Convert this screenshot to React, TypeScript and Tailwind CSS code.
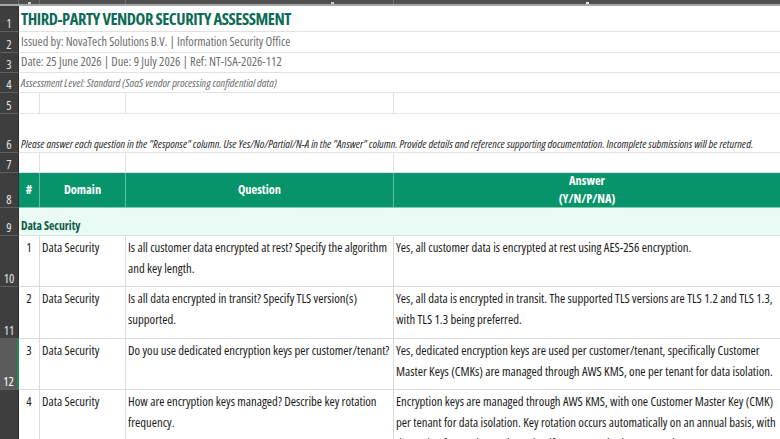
import React from "react";

type Q = { n: number; domain: string; question: string; answer: string; h: string; sel?: boolean };

const rows: Q[] = [
  {
    n: 1,
    domain: "Data Security",
    question: "Is all customer data encrypted at rest? Specify the algorithm and key length.",
    answer: "Yes, all customer data is encrypted at rest using AES-256 encryption.",
    h: "h-[51px]",
  },
  {
    n: 2,
    domain: "Data Security",
    question: "Is all data encrypted in transit? Specify TLS version(s) supported.",
    answer:
      "Yes, all data is encrypted in transit. The supported TLS versions are TLS 1.2 and TLS 1.3, with TLS 1.3 being preferred.",
    h: "h-[52px]",
  },
  {
    n: 3,
    domain: "Data Security",
    question: "Do you use dedicated encryption keys per customer/tenant?",
    answer:
      "Yes, dedicated encryption keys are used per customer/tenant, specifically Customer Master Keys (CMKs) are managed through AWS KMS, one per tenant for data isolation.",
    h: "h-[51px]",
    sel: true,
  },
  {
    n: 4,
    domain: "Data Security",
    question: "How are encryption keys managed? Describe key rotation frequency.",
    answer:
      "Encryption keys are managed through AWS KMS, with one Customer Master Key (CMK) per tenant for data isolation. Key rotation occurs automatically on an annual basis, with the option for on-demand rotation if a compromise is suspected.",
    h: "h-[62px]",
  },
];

const RowHead = ({ n, sel }: { n: number; sel?: boolean }) => (
  <div
    className={`w-[19px] shrink-0 flex items-end justify-center pb-[1px] text-[12.5px] leading-none border-b border-[#5e5e5e] ${
      sel ? "bg-[#5a5a5a] text-white border-r-2 border-r-[#1e8a4c]" : "bg-[#3e3e3e] text-[#e4e4e4] border-r border-r-[#2e2e2e]"
    }`}
  >
    {n}
  </div>
);

const Wide = ({ n, h, children }: { n: number; h: string; children?: React.ReactNode }) => (
  <div className={`flex ${h}`}>
    <RowHead n={n} />
    <div className="flex-1 border-b border-[#e2e2e2] bg-white min-w-0">{children}</div>
  </div>
);

const Split = ({ n, h }: { n: number; h: string }) => (
  <div className={`flex ${h}`}>
    <RowHead n={n} />
    <div className="w-[21px] border-b border-r border-[#e2e2e2] bg-white" />
    <div className="w-[86px] border-b border-r border-[#e2e2e2] bg-white" />
    <div className="w-[268px] border-b border-r border-[#e2e2e2] bg-white" />
    <div className="flex-1 border-b border-[#e2e2e2] bg-white" />
  </div>
);

export default function App() {
  return (
    <div className="w-[780px] h-[439px] overflow-hidden bg-white text-[#1a1a1a] font-['Open_Sans',sans-serif] [font-stretch:75%]">
      {/* column header strip */}
      <div className="flex h-[6px] bg-[#4f4f4f] border-b-2 border-[#a8a8a8]">
        <div className="w-[19px] border-r border-[#6e6e6e]" />
        <div className="w-[21px] border-r border-[#6e6e6e] flex justify-center items-end">
          <div className="w-[3px] h-[2px] bg-[#cfcfcf]" />
        </div>
        <div className="w-[86px] border-r border-[#6e6e6e]" />
        <div className="w-[268px] border-r border-[#6e6e6e] flex items-end pl-[205px]">
          <div className="w-[3px] h-[2px] bg-[#cfcfcf]" />
        </div>
        <div className="flex-1 flex justify-center items-end">
          <div className="w-[3px] h-[2px] bg-[#e8e8e8]" />
        </div>
      </div>

      <Wide n={1} h="h-[26px]">
        <div className="pl-[2px] pt-[1px] text-[16.5px] font-bold leading-[24px] tracking-[-0.45px] text-[#0e6b57] whitespace-nowrap">
          THIRD-PARTY VENDOR SECURITY ASSESSMENT
        </div>
      </Wide>
      <Wide n={2} h="h-[21px]">
        <div className="pl-[2px] text-[12.3px] leading-[19px] text-[#6e6e6e] whitespace-nowrap">
          Issued by: NovaTech Solutions B.V. | Information Security Office
        </div>
      </Wide>
      <Wide n={3} h="h-[20px]">
        <div className="pl-[2px] text-[12.5px] leading-[18px] text-[#6e6e6e] whitespace-nowrap">
          Date: 25 June 2026 | Due: 9 July 2026 | Ref: NT-ISA-2026-112
        </div>
      </Wide>
      <Wide n={4} h="h-[20px]">
        <div className="pl-[2px] pt-[1px] text-[11.4px] italic leading-[17px] text-[#6e6e6e] whitespace-nowrap">
          Assessment Level: Standard (SaaS vendor processing confidential data)
        </div>
      </Wide>
      <Split n={5} h="h-[21px]" />
      <Wide n={6} h="h-[39px]">
        <div className="h-full flex items-end pl-[2px] pb-0 text-[11.4px] italic leading-[16px] text-[#2a2a2a] whitespace-nowrap">
          Please answer each question in the "Response" column. Use Yes/No/Partial/N-A in the "Answer" column. Provide
          details and reference supporting documentation. Incomplete submissions will be returned.
        </div>
      </Wide>
      <Split n={7} h="h-[20px]" />

      {/* table header */}
      <div className="flex h-[35px]">
        <RowHead n={8} />
        <div className="flex flex-1 bg-[#07946a] text-white font-bold text-[12.4px] border-b border-[#7ccbb0]">
          <div className="w-[21px] flex items-center justify-center border-r border-[#5fbf9c]">#</div>
          <div className="w-[86px] flex items-center justify-center border-r border-[#5fbf9c]">Domain</div>
          <div className="w-[268px] flex items-center justify-center border-r border-[#5fbf9c]">Question</div>
          <div className="flex-1 flex flex-col items-center justify-center leading-[18px]">
            <span>Answer</span>
            <span>(Y/N/P/NA)</span>
          </div>
        </div>
      </div>

      <div className="flex h-[28px]">
        <RowHead n={9} />
        <div className="flex-1 bg-[#eafaf4] border-b border-[#d6e4de] flex items-end pl-[2px] pb-[1px] text-[11.6px] font-bold text-[#0d5c45]">
          Data Security
        </div>
      </div>

      {rows.map((r) => (
        <div key={r.n} className={`flex ${r.h}`}>
          <RowHead n={r.n + 9} sel={r.sel} />
          <div className="w-[21px] border-b border-r border-[#dcdcdc] text-center text-[12.7px] leading-[21px] pt-[1px]">
            {r.n}
          </div>
          <div className="w-[86px] border-b border-r border-[#dcdcdc] pl-[2px] text-[12.7px] leading-[21px] pt-[1px] whitespace-nowrap">
            {r.domain}
          </div>
          <div className="w-[268px] border-b border-r border-[#dcdcdc] pl-[2px] text-[12.7px] leading-[21px] pt-[1px] overflow-hidden">
            {r.question}
          </div>
          <div className="flex-1 border-b border-[#dcdcdc] pl-[2px] text-[12.7px] leading-[21px] pt-[1px] overflow-hidden">
            {r.answer}
          </div>
        </div>
      ))}
    </div>
  );
}
